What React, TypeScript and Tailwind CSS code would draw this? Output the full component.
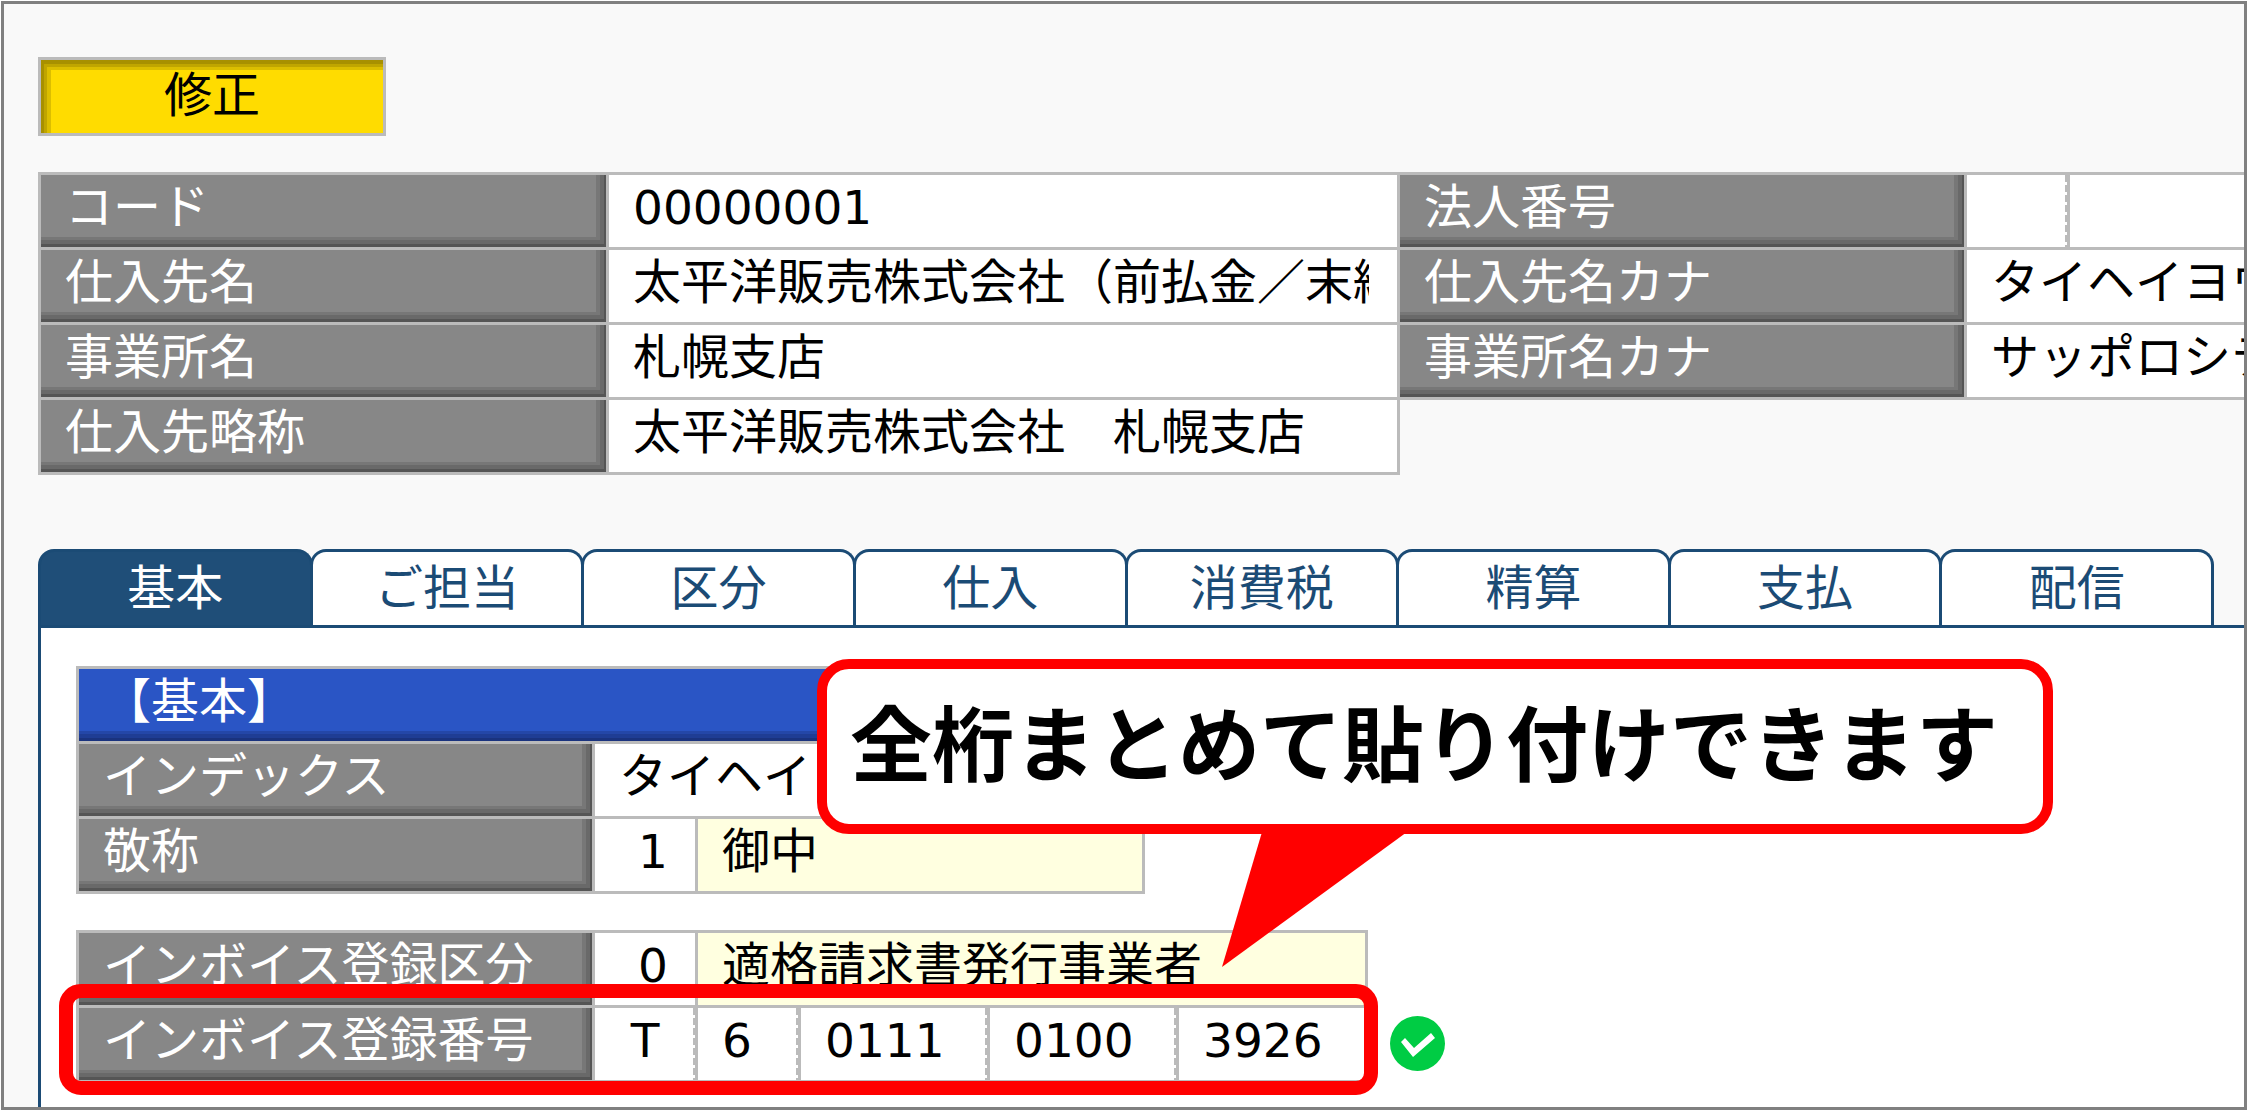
import { useState } from "react";

const labelBase =
  "flex h-[72px] items-center bg-[#878787] pb-4 pl-6 text-[48px] leading-[56px] whitespace-nowrap text-white shadow-[inset_-2px_-3px_0_#555,inset_-6px_-7px_0_#696969,inset_-10px_-10px_0_#777]";
const jpField =
  "block h-[72px] w-full min-w-0 pb-4 pl-6 text-[48px] leading-[56px] text-black outline-none";
const numField =
  "block h-[72px] w-full min-w-0 bg-white pb-2 font-['DejaVu_Sans',sans-serif] text-[47px] text-black outline-none";
const dashed =
  "bg-[repeating-linear-gradient(to_bottom,#bbb_0_7px,#fff_7px_10px)] bg-[length:2px_100%] bg-right bg-no-repeat";

function Label({ id, text }: { id: string; text: string }) {
  return (
    <label htmlFor={id} className={labelBase}>
      {text}
    </label>
  );
}

function TextField({ id, value, className = "pr-7" }: { id: string; value: string; className?: string }) {
  return <input id={id} defaultValue={value} className={`${jpField} bg-white ${className}`} />;
}

function NumField({ id, label, value, className }: { id: string; label?: string; value: string; className: string }) {
  return <input id={id} aria-label={label} defaultValue={value} className={`${numField} ${className}`} />;
}

function Result({ htmlFor, text }: { htmlFor: string; text: string }) {
  return (
    <output htmlFor={htmlFor} className={`${jpField} bg-[#ffffe0] pt-0`}>
      {text}
    </output>
  );
}

function Header() {
  return (
    <section className="flex items-start">
      <div className="grid shrink-0 grid-cols-[565px_788px] gap-[3px] bg-[#bbb] p-[3px]">
        <Label id="code" text="コード" />
        <NumField id="code" value="00000001" className="pl-6" />
        <Label id="name" text="仕入先名" />
        <TextField id="name" value="太平洋販売株式会社（前払金／末締" />
        <Label id="office" text="事業所名" />
        <TextField id="office" value="札幌支店" />
        <Label id="short" text="仕入先略称" />
        <TextField id="short" value="太平洋販売株式会社　札幌支店" />
      </div>
      <div className="grid min-w-0 flex-1 grid-cols-[564px_minmax(0,1fr)] gap-[3px] bg-[#bbb] py-[3px]">
        <Label id="corp" text="法人番号" />
        <div className="grid grid-cols-[100px_minmax(0,1fr)] gap-[3px]">
          <NumField id="corp" value="" className={`px-6 ${dashed}`} />
          <NumField id="corp2" label="法人番号 2" value="" className="px-6" />
        </div>
        <Label id="nameKana" text="仕入先名カナ" />
        <TextField id="nameKana" value="タイヘイヨウ" className="pr-0" />
        <Label id="officeKana" text="事業所名カナ" />
        <TextField id="officeKana" value="サッポロシテン" className="pr-0" />
      </div>
    </section>
  );
}

const tabs = ["基本", "ご担当", "区分", "仕入", "消費税", "精算", "支払", "配信"];

function Tabs() {
  const [active, setActive] = useState(0);
  return (
    <div role="tablist" className="mr-[30px] flex">
      {tabs.map((t, i) => (
        <button
          key={t}
          role="tab"
          aria-selected={i === active}
          onClick={() => setActive(i)}
          className={`h-[76px] flex-1 rounded-t-[16px] border-[3px] border-b-0 border-[#1b4b75] pb-[10px] text-[48px] leading-[60px] not-first:-ml-[3px] ${
            i === active ? "bg-[#1f4e78] text-white" : "bg-white text-[#1b4b75]"
          }`}
        >
          {t}
        </button>
      ))}
    </div>
  );
}

function Callout() {
  return (
    <div className="absolute top-[31px] left-[776px] z-10">
      <p className="rounded-[32px] border-[10px] border-[#f00] bg-white pr-[45px] pb-[13px] pl-[23px] text-[82px] leading-[142px] font-bold whitespace-nowrap text-black">
        全桁まとめて貼り付けできます
      </p>
      <svg
        className="absolute top-[173px] left-[403px]"
        width="190"
        height="136"
        viewBox="0 0 190 136"
        aria-hidden="true"
      >
        <polygon points="42,0 187,0 2,135" fill="#f00" />
      </svg>
    </div>
  );
}

function BasicPanel() {
  return (
    <section className="relative flex-1 border-t-[3px] border-l-[3px] border-[#1b4b75] bg-white pt-[38px] pl-[35px]">
      <div className="flex w-[1069px] flex-col gap-[3px] bg-[#bbb] p-[3px]">
        <h2 className="flex h-[72px] items-center bg-[#2a55c5] pb-4 pl-6 text-[48px] leading-[56px] text-white shadow-[inset_0_-3px_0_#1a337e,inset_0_-7px_0_#1f3d94,inset_0_-10px_0_#2447a8]">
          【基本】
        </h2>
        <div className="grid grid-cols-[513px_minmax(0,1fr)] gap-[3px]">
          <Label id="index" text="インデックス" />
          <TextField id="index" value="タイヘイヨウ" />
        </div>
        <div className="grid grid-cols-[513px_100px_minmax(0,1fr)] gap-[3px]">
          <Label id="title" text="敬称" />
          <NumField id="title" value="1" className="pr-[27px] text-right" />
          <Result htmlFor="title" text="御中" />
        </div>
      </div>

      <div className="mt-9 flex items-start">
        <div className="relative flex w-[1292px] flex-col gap-[3px] bg-[#bbb] p-[3px]">
          <div className="grid grid-cols-[513px_100px_minmax(0,1fr)] gap-[3px]">
            <Label id="kind" text="インボイス登録区分" />
            <NumField id="kind" value="0" className="pr-[27px] text-right" />
            <Result htmlFor="kind" text="適格請求書発行事業者" />
          </div>
          <div className="grid grid-cols-[513px_100px_100px_minmax(0,1fr)_minmax(0,1fr)_minmax(0,1fr)] gap-[3px]">
            <Label id="number" text="インボイス登録番号" />
            <NumField id="number" value="T" className={`text-center ${dashed}`} />
            <NumField id="n1" label="登録番号 1" value="6" className={`pl-6 ${dashed}`} />
            <NumField id="n2" label="登録番号 2" value="0111" className={`pl-6 ${dashed}`} />
            <NumField id="n3" label="登録番号 3" value="0100" className={`pl-6 ${dashed}`} />
            <NumField id="n4" label="登録番号 4" value="3926" className="pl-6" />
          </div>
          <div className="pointer-events-none absolute top-[54px] -right-[10px] -bottom-3 -left-[17px] rounded-[22px] border-[14px] border-[#f00]" />
        </div>
        <svg className="mt-[86px] ml-[22px]" width="55" height="55" viewBox="0 0 55 55" role="img" aria-label="OK">
          <circle cx="27.5" cy="27.5" r="27.5" fill="#00cc44" />
          <polygon points="15,22 11,26 23,41 45,22 41,17 24,32" fill="#fff" />
        </svg>
      </div>
      <Callout />
    </section>
  );
}

export default function App() {
  return (
    <div className="flex min-h-screen flex-col bg-white p-px font-['Noto_Sans_CJK_JP',sans-serif]">
      <main className="flex flex-1 flex-col overflow-hidden border-[3px] border-[#808080] bg-[#f9f9f9] pt-[53px] pl-[34px]">
        <button className="h-[79px] w-[348px] border-[3px] border-[#bbb] bg-[#ffdc00] pb-3 text-[48px] leading-[60px] text-black shadow-[inset_3px_4px_0_#a89000,inset_6px_7px_0_#c0a500,inset_10px_10px_0_#dcbe00]">
          修正
        </button>
        <div className="mt-9">
          <Header />
        </div>
        <div className="mt-[74px] flex flex-1 flex-col">
          <Tabs />
          <BasicPanel />
        </div>
      </main>
    </div>
  );
}
